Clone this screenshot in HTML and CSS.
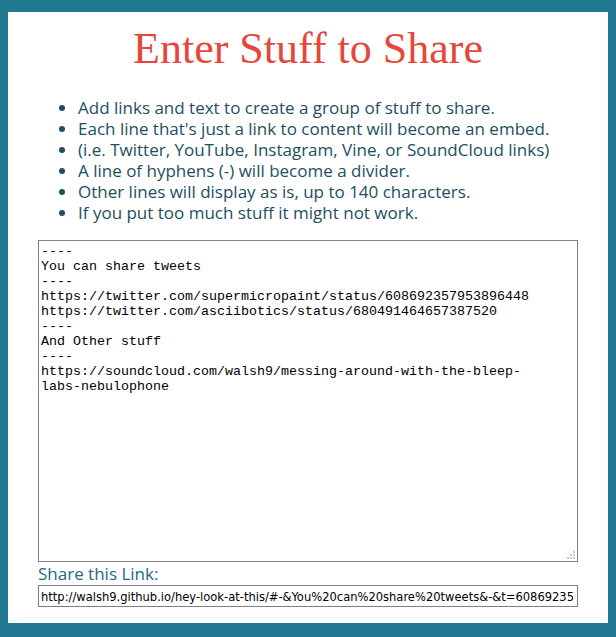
FILE: index.html
```html
<!DOCTYPE html>
<html>
<head>
<meta charset="utf-8">
<link rel="stylesheet" href="styles.css">
</head>
<body>
<div class="panel">
  <h1 class="title">Enter Stuff to Share</h1>
  <ul class="tips">
    <li>Add links and text to create a group of stuff to share.</li>
    <li>Each line that's just a link to content will become an embed.</li>
    <li>(i.e. Twitter, YouTube, Instagram, Vine, or SoundCloud links)</li>
    <li>A line of hyphens (-) will become a divider.</li>
    <li>Other lines will display as is, up to 140 characters.</li>
    <li>If you put too much stuff it might not work.</li>
  </ul>
  <div class="form">
    <div class="editor-wrap">
      <textarea class="editor" spellcheck="false">----
You can share tweets
----
https://twitter.com/supermicropaint/status/608692357953896448
https://twitter.com/asciibotics/status/680491464657387520
----
And Other stuff
----
https://soundcloud.com/walsh9/messing-around-with-the-bleep-labs-nebulophone</textarea>
      <svg class="grip" width="8" height="8" viewBox="0 0 8 8">
        <rect x="6" y="0" width="2" height="2" fill="#c8c8c8"/>
        <rect x="3" y="3" width="2" height="2" fill="#c8c8c8"/>
        <rect x="6" y="3" width="2" height="2" fill="#c8c8c8"/>
        <rect x="0" y="6" width="2" height="2" fill="#c8c8c8"/>
        <rect x="3" y="6" width="2" height="2" fill="#c8c8c8"/>
        <rect x="6" y="6" width="2" height="2" fill="#c8c8c8"/>
      </svg>
    </div>
    <label class="share-label">Share this Link:</label>
    <input class="share-link" type="text" value="http://walsh9.github.io/hey-look-at-this/#-&amp;You%20can%20share%20tweets&amp;-&amp;t=608692357953896448&amp;t=680491464657387520">
  </div>
</div>
</body>
</html>
```
FILE: styles.css
```css
html, body {
  margin: 0;
  padding: 0;
}
body {
  background: #217891;
  padding: 12px 8px 14px 8px;
  height: 637px;
  box-sizing: border-box;
}
.panel {
  background: #ffffff;
  height: 611px;
  box-sizing: border-box;
  padding: 12px 30px 0 30px;
}
.title {
  margin: 0;
  text-align: center;
  font-family: "Liberation Serif", serif;
  font-weight: normal;
  font-size: 44px;
  line-height: 50px;
  color: #e5473a;
}
.tips {
  margin: 23px 0 0 0;
  padding: 0 0 0 40px;
  font-family: "Open Sans", Lato, sans-serif;
  font-size: 17px;
  line-height: 21px;
  color: #1d4f60;
}
.tips li::marker {
  color: #1d4f60;
}
.form {
  display: flex;
  flex-direction: column;
  margin-top: 17px;
}
.editor-wrap {
  position: relative;
  width: 540px;
  height: 322px;
}
.editor {
  display: block;
  width: 540px;
  height: 322px;
  box-sizing: border-box;
  margin: 0;
  padding: 3px 20px 2px 2px;
  border: 1px solid #808080;
  font-family: "Liberation Mono", monospace;
  font-size: 13.333px;
  line-height: 15px;
  color: #000;
  resize: none;
  outline: none;
}
.grip {
  position: absolute;
  right: 3px;
  bottom: 3px;
}
.share-label {
  margin-top: 1px;
  font-family: "Open Sans", Lato, sans-serif;
  font-size: 17px;
  line-height: 21px;
  color: #236b80;
}
.share-link {
  margin-top: 1px;
  width: 540px;
  height: 22px;
  box-sizing: border-box;
  border: 1px solid #808080;
  padding: 1px 2px;
  font-family: "DejaVu Sans Condensed", "Liberation Sans Narrow", sans-serif;
  font-size: 12.8px;
  color: #000;
  outline: none;
}
```
